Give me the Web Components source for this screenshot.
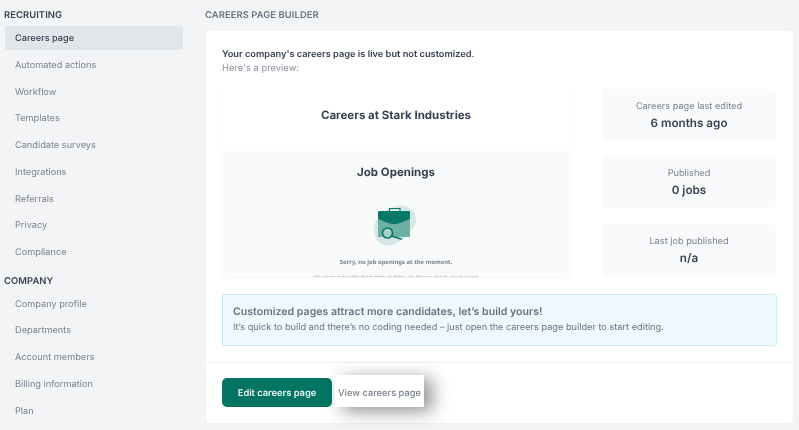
<!DOCTYPE html>
<html lang="en">
<head>
<meta charset="utf-8">
<title>Careers page builder</title>
<style>
    html, body {
        margin: 0;
        height: 430px;
        overflow: hidden;
        background: #f3f4f6;
        font-family: Inter, "Liberation Sans", sans-serif;
        text-rendering: geometricPrecision;
    }
</style>
</head>
<body>
<settings-layout>
    <side-nav slot="nav">
        <nav-heading>RECRUITING</nav-heading>
        <nav-item active>Careers page</nav-item>
        <nav-item>Automated actions</nav-item>
        <nav-item>Workflow</nav-item>
        <nav-item>Templates</nav-item>
        <nav-item>Candidate surveys</nav-item>
        <nav-item>Integrations</nav-item>
        <nav-item>Referrals</nav-item>
        <nav-item>Privacy</nav-item>
        <nav-item>Compliance</nav-item>
        <nav-heading second>COMPANY</nav-heading>
        <nav-item>Company profile</nav-item>
        <nav-item>Departments</nav-item>
        <nav-item>Account members</nav-item>
        <nav-item>Billing information</nav-item>
        <nav-item>Plan</nav-item>
    </side-nav>
    <builder-card title="CAREERS PAGE BUILDER">
        <careers-preview company="Stark Industries"></careers-preview>
        <stat-tile slot="stats" label="Careers page last edited" value="6 months ago"></stat-tile>
        <stat-tile slot="stats" label="Published" value="0 jobs"></stat-tile>
        <stat-tile slot="stats" label="Last job published" value="n/a"></stat-tile>
        <notice-box slot="notice" heading="Customized pages attract more candidates, let’s build yours!">It’s quick to build and there’s no coding needed – just open the careers page builder to start editing.</notice-box>
        <action-button slot="actions" primary>Edit careers page</action-button>
        <action-button slot="actions">View careers page</action-button>
    </builder-card>
</settings-layout>

<script>
class SettingsLayout extends HTMLElement {
    constructor () {
        super();
        this.attachShadow({ mode: 'open' }).innerHTML = `
            <style>
                :host {
                    display: grid;
                    grid-template-columns: 206px 587px;
                    height: 430px;
                    filter: blur(0.3px);
                }
            </style>
            <slot name="nav"></slot>
            <slot></slot>
        `;
    }
}

class SideNav extends HTMLElement {
    constructor () {
        super();
        this.attachShadow({ mode: 'open' }).innerHTML = `
            <style>
                :host {
                    display: block;
                    padding: 9px 23px 0 5px;
                }
            </style>
            <slot></slot>
        `;
    }
}

class NavHeading extends HTMLElement {
    constructor () {
        super();
        this.attachShadow({ mode: 'open' }).innerHTML = `
            <style>
                :host {
                    display: block;
                    height: 13px;
                    line-height: 14px;
                    margin: 0 0 4px -1px;
                    font-size: 9.4px;
                    font-weight: 600;
                    letter-spacing: 0.01em;
                    color: #374151;
                }
                :host([second]) { margin-top: 11px; margin-bottom: 3.5px; }
            </style>
            <slot></slot>
        `;
    }
}

class NavItem extends HTMLElement {
    constructor () {
        super();
        this.attachShadow({ mode: 'open' }).innerHTML = `
            <style>
                :host {
                    display: block;
                    height: 24px;
                    line-height: 26px;
                    margin-bottom: 2.75px;
                    padding-left: 10px;
                    border-radius: 3px;
                    font-size: 9.2px;
                    color: #7b828e;
                }
                :host([active]) {
                    background: #e1e6ea;
                    color: #374151;
                    font-weight: 500;
                }
            </style>
            <slot></slot>
        `;
    }
}

class BuilderCard extends HTMLElement {
    constructor () {
        super();
        this.attachShadow({ mode: 'open' }).innerHTML = `
            <style>
                :host { display: block; }
                h2 {
                    margin: 0 0 0 -1px;
                    padding-top: 9px;
                    height: 22px;
                    box-sizing: border-box;
                    line-height: 14px;
                    font-size: 9.4px;
                    font-weight: 600;
                    letter-spacing: 0.01em;
                    color: #6b7280;
                }
                .card {
                    height: 392px;
                    margin-top: 9px;
                    background: #fff;
                    border-radius: 3px;
                    box-shadow: 0 1px 2px rgba(0, 0, 0, 0.03);
                }
                .body {
                    height: 332px;
                    box-sizing: border-box;
                    padding: 16px 16px 0;
                    border-bottom: 1px solid #eceef0;
                }
                .lead { line-height: 15px; font-size: 9.25px; color: #374151; font-weight: 600; }
                .sub { line-height: 13px; font-size: 9.4px; color: #8a909b; }
                .columns {
                    display: grid;
                    grid-template-columns: 348px 174px;
                    column-gap: 32px;
                    margin-top: 13px;
                }
                .stats {
                    display: flex;
                    flex-direction: column;
                    gap: 15.25px;
                    padding-top: 1px;
                }
                ::slotted([slot="notice"]) { margin-top: 17px; }
                .actions {
                    display: flex;
                    align-items: flex-end;
                    gap: 3px;
                    height: 44px;
                    padding: 0 16px;
                }
            </style>
            <h2>${this.getAttribute('title')}</h2>
            <div class="card">
                <div class="body">
                    <div class="lead">Your company's careers page is live but not customized.</div>
                    <div class="sub">Here's a preview:</div>
                    <div class="columns">
                        <slot></slot>
                        <div class="stats"><slot name="stats"></slot></div>
                    </div>
                    <slot name="notice"></slot>
                </div>
                <div class="actions"><slot name="actions"></slot></div>
            </div>
        `;
    }
}

class CareersPreview extends HTMLElement {
    constructor () {
        super();
        this.attachShadow({ mode: 'open' }).innerHTML = `
            <style>
                :host {
                    display: block;
                    height: 189px;
                    overflow: hidden;
                    border-radius: 3px;
                    box-shadow: 0 1px 3px rgba(0, 0, 0, 0.05);
                    text-align: center;
                    color: #374151;
                }
                .top {
                    height: 63px;
                    line-height: 55px;
                    font-size: 11.5px;
                    font-weight: 700;
                    background: #fff;
                }
                .rest { height: 126px; background: #f9fafb; padding-top: 14px; box-sizing: border-box; }
                h3 { margin: 0; line-height: 15px; font-size: 11.5px; font-weight: 700; }
                svg { display: block; margin: 25px auto 0; }
                .sorry {
                    margin-top: 11px;
                    line-height: 8px;
                    font-family: "Noto Sans", Inter, sans-serif;
                    font-size: 5.9px;
                    font-weight: 700;
                    color: #7b828e;
                }
                .later {
                    margin-top: 7px;
                    line-height: 8px;
                    font-family: "Noto Sans", Inter, sans-serif;
                    font-size: 5.4px;
                    color: #9ca3af;
                    white-space: nowrap;
                }
            </style>
            <div class="top">Careers at ${this.getAttribute('company')}</div>
            <div class="rest">
                <h3>Job Openings</h3>
                <svg width="44" height="42" viewBox="0 0 44 42" aria-hidden="true">
                    <path d="M24 1C32 0 41 4 42 13c1 8-5 12-9 17-3 4-7 6-12 9-6 3-14 2-18-4C0 30-1 22 2 16 5 9 14 2 24 1z" fill="#d5e7e4"/>
                    <path d="M15.500 6V3.500h10.500V6" fill="none" stroke="#0a7a68" stroke-width="1.200"/>
                    <path d="M4 14h32v18H4z" fill="#6fb0a5"/>
                    <path d="M5 6h30a1 1 0 0 1 1 1v7c-7 3-12 5-16 5s-9-2-16-5V7a1 1 0 0 1 1-1z" fill="#0a7a68"/>
                    <circle cx="13.500" cy="28" r="5" fill="#a9d0c9" stroke="#0a7a68" stroke-width="1.700"/>
                    <path d="M17.500 31l9.500 3" stroke="#0a7a68" stroke-width="1.800" stroke-linecap="round"/>
                </svg>
                <div class="sorry">Sorry, no job openings at the moment.</div>
                <div class="later">We open new jobs from time to time, so please check again soon!</div>
            </div>
        `;
    }
}

class StatTile extends HTMLElement {
    constructor () {
        super();
        this.attachShadow({ mode: 'open' }).innerHTML = `
            <style>
                :host {
                    display: block;
                    height: 52px;
                    box-sizing: border-box;
                    padding-top: 11px;
                    border-radius: 3px;
                    background: #f9fafb;
                    text-align: center;
                }
                .label { line-height: 14px; font-size: 9.2px; color: #7b828e; }
                .value { margin-top: 2px; line-height: 15px; font-size: 11.7px; font-weight: 600; color: #374151; }
            </style>
            <div class="label">${this.getAttribute('label')}</div>
            <div class="value">${this.getAttribute('value')}</div>
        `;
    }
}

class NoticeBox extends HTMLElement {
    constructor () {
        super();
        this.attachShadow({ mode: 'open' }).innerHTML = `
            <style>
                :host {
                    display: block;
                    height: 52px;
                    box-sizing: border-box;
                    padding: 9px 10px 0;
                    border: 1px solid #cfe9f7;
                    border-radius: 3px;
                    background: #eef9fe;
                    color: #6b7280;
                }
                .head { line-height: 16px; font-size: 10.6px; font-weight: 600; }
                .text { margin-top: 1px; line-height: 14px; font-size: 9.2px; }
            </style>
            <div class="head">${this.getAttribute('heading')}</div>
            <div class="text"><slot></slot></div>
        `;
    }
}

class ActionButton extends HTMLElement {
    constructor () {
        super();
        this.attachShadow({ mode: 'open' }).innerHTML = `
            <style>
                :host {
                    display: flex;
                    align-items: center;
                    justify-content: center;
                    box-sizing: border-box;
                    height: 32px;
                    width: 89px;
                    padding-top: 5px;
                    background: #fff;
                    box-shadow: 8px 4px 18px rgba(0, 0, 0, 0.45);
                    font-size: 9.3px;
                    font-weight: 500;
                    white-space: nowrap;
                    color: #7b828e;
                }
                :host([primary]) {
                    height: 29px;
                    width: 110px;
                    padding-top: 1px;
                    border-radius: 5px;
                    background: #047562;
                    box-shadow: none;
                    color: #eef6f4;
                    font-weight: 600;
                }
            </style>
            <slot></slot>
        `;
    }
}

customElements.define('settings-layout', SettingsLayout);
customElements.define('side-nav', SideNav);
customElements.define('nav-heading', NavHeading);
customElements.define('nav-item', NavItem);
customElements.define('builder-card', BuilderCard);
customElements.define('careers-preview', CareersPreview);
customElements.define('stat-tile', StatTile);
customElements.define('notice-box', NoticeBox);
customElements.define('action-button', ActionButton);
</script>
</body>
</html>
